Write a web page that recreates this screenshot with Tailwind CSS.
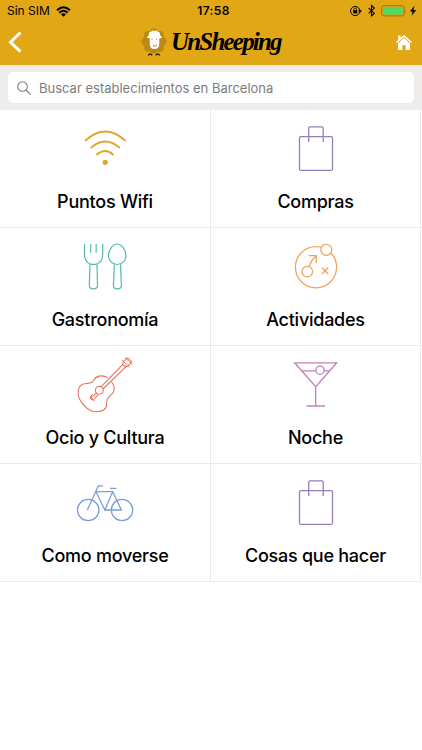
<!DOCTYPE html>
<html lang="es">
<head>
    <meta charset="UTF-8">
    <meta name="viewport" content="width=device-width, initial-scale=1.0">
    <title>UnSheeping</title>
    <script src="https://cdn.jsdelivr.net/npm/@tailwindcss/browser@4"></script>
</head>
<body class="bg-white font-['Inter',sans-serif] text-black">
    <header class="h-[65px] bg-[#e1a714]">
        <!-- Barra de estado -->
        <div class="grid grid-cols-3 items-center h-[22px] pl-[7px] pr-[4px] text-[12px] leading-none">
            <div class="flex items-center gap-[6px]">
                <span>Sin SIM</span>
                <svg class="w-[15px] h-[11px]" viewBox="0 0 15 11" fill="none" stroke="#000" stroke-width="2">
                    <path d="M1 4.2Q7.5-1.8 14 4.2M3.3 6.7Q7.5 2.9 11.7 6.7"/>
                    <path d="M5 8.2Q7.5 6.2 10 8.2L7.5 10.8Z" fill="#000" stroke="none"/>
                </svg>
            </div>
            <span class="text-center font-semibold tracking-[0.4px] pl-[2px]">17:58</span>
            <div class="flex items-center justify-end">
                <svg class="w-[68px] h-[14px]" viewBox="0 0 68 14" fill="none" stroke="#000">
                    <circle cx="5.200" cy="7" r="4.600" stroke-width="1"/>
                    <path d="M8 6.200h4L10 9Z" fill="#000" stroke="none"/>
                    <rect x="3.200" y="6.200" width="4" height="3.200" fill="#000" stroke="none"/>
                    <path d="M3.900 6.300V5.300a1.300 1.300 0 0 1 2.600 0v1" stroke-width=".8"/>
                    <path d="M18.700 4.200l5.600 5.200-2.800 2.400V1.600l2.800 2.500-5.600 5.300" stroke-width="1.100"/>
                    <rect x="31.700" y="1.700" width="22.500" height="10.200" rx="2" stroke="#9b730e"/>
                    <rect x="33.200" y="3.200" width="19.500" height="7.200" rx=".8" fill="#4cd964" stroke="none"/>
                    <path d="M55.500 5.200q1.500 1.700 0 3.400Z" fill="#9b730e" stroke="none"/>
                    <path d="M64.500 1.800l-4.600 5.600h2.600l-1 4.400 4.800-5.800h-2.800Z" fill="#000" stroke="none"/>
                </svg>
            </div>
        </div>
        <!-- Navegación -->
        <div class="flex items-center justify-between h-[43px] pl-[8px] pr-[10px] pb-[3px]">
            <svg class="w-[16px] h-[24px]" viewBox="0 0 16 24" fill="none" stroke="#fff" stroke-width="3">
                <path d="M12.500 2.500L2.500 12.200l10 9.500"/>
            </svg>
            <div class="flex items-center gap-[4px] ml-[3px]">
                <svg class="w-[26px] h-[32px] mt-[2px]" viewBox="3 4 26 32">
                    <g fill="#b98a16">
                        <circle cx="16" cy="10" r="4.500"/><circle cx="10.500" cy="12.500" r="4.500"/><circle cx="21.500" cy="12.500" r="4.500"/>
                        <circle cx="8" cy="18.500" r="4.500"/><circle cx="24" cy="18.500" r="4.500"/><circle cx="10.500" cy="24.500" r="4.500"/>
                        <circle cx="21.500" cy="24.500" r="4.500"/><circle cx="16" cy="26" r="4.500"/><circle cx="16" cy="18" r="9"/>
                    </g>
                    <path d="M11 12q-1-3 2-3.300 1.500-2 3.500-.7 2-1.200 3.500.7 2.500.500 2 3.300l2.300 2.700-3 .5v5.300q0 5.500-4.800 5.500t-4.800-5.500v-5.300l-3-.5Z" fill="#fff"/>
                    <path d="M14 15.800v1M18.500 15.800v1M15 22.800q2.500 1 4-1.200" stroke="#a87808" stroke-width=".9" fill="none"/>
                    <path d="M10.200 32.400q2-2.700 4 0M17.800 32.400q2-2.700 4 0" fill="none" stroke="#2b2005" stroke-width="1.500"/>
                </svg>
                <h1 class="w-[111px] font-['Liberation_Serif',serif] text-[25px] leading-[32px] font-bold italic tracking-[-1.8px] whitespace-nowrap">UnSheeping</h1>
            </div>
            <svg class="w-[16px] h-[17px]" viewBox="0 0 16 17" fill="#fff">
                <path d="M8 1l8 7-.9 1L8 2.900.900 9 0 8l2.200-2V1.600h2.300v2.500Z"/>
                <path d="M8 4l6 5.200V16H9.700v-4.700H6.400V16H2V9.200Z"/>
            </svg>
        </div>
    </header>

    <!-- Buscador -->
    <div class="h-[45px] bg-[#eeedeb] px-2 pt-[7px]">
        <div class="flex items-center h-[31px] bg-white rounded-[5px] pl-[9px] gap-[8px]">
            <svg class="w-[14px] h-[14px]" viewBox="0 0 14 14" fill="none" stroke="#7c7c7c" stroke-width="1.100">
                <circle cx="5.500" cy="5.500" r="4.800"/>
                <path d="M9 9l4.600 4.600"/>
            </svg>
            <span class="pt-[2px] text-[13px] text-[#7c7c7c] whitespace-nowrap">Buscar establecimientos en Barcelona</span>
        </div>
    </div>

    <!-- Categorías -->
    <main class="grid grid-cols-[211px_210px] auto-rows-[118px] text-[18px] font-medium leading-6 tracking-[-0.25px] whitespace-nowrap">
        <a href="#" class="flex flex-col items-center pt-[10px] gap-[6px] border-r border-b border-[#ebebeb]">
            <svg class="w-[80px] h-[64px]" viewBox="0 0 80 64" fill="none" stroke="#dca72b" stroke-width="1.800" stroke-linecap="round">
                <path d="M20.500 20.500Q40.200 2.500 60 20.500M26.300 27.500Q40.200 15.500 54.300 27.500M32 34.500Q40.200 27.500 48 34.500"/>
                <circle cx="40.200" cy="42.300" r="2.600" fill="#dca72b" stroke="none"/>
            </svg>
            <span>Puntos Wifi</span>
        </a>
        <a href="#" class="flex flex-col items-center pt-[10px] gap-[6px] border-r border-b border-[#ebebeb]">
            <svg class="w-[80px] h-[64px]" viewBox="0 0 80 64" fill="none" stroke="#9380b8" stroke-width="1.300">
                <rect x="23.500" y="16.600" width="33" height="33.800" rx="1.500"/>
                <path d="M32.700 22V8.200q0-1.400 1.400-1.400h11.700q1.400 0 1.400 1.400V22"/>
            </svg>
            <span>Compras</span>
        </a>
        <a href="#" class="flex flex-col items-center pt-[10px] gap-[6px] border-r border-b border-[#ebebeb]">
            <svg class="w-[80px] h-[64px]" viewBox="0 0 80 64" fill="none" stroke="#55b9ac" stroke-width="1.200">
                <path d="M19.500 6v11q0 7 6.500 9.300h5.200q6.500-2.300 6.500-9.300V6M25.700 6v8.700M31.200 6v8.700"/>
                <path d="M25 26.300l-.700 21.500q0 3 4.100 3t4.100-3l-.500-21.500"/>
                <path d="M52.200 6c4.500 0 8.800 6.500 8.800 12 0 4.500-4 8.500-8.800 8.500s-8.800-4-8.800-8.500c0-5.500 4.300-12 8.800-12Z"/>
                <path d="M49.300 26.300l-.900 21.500q0 3 4 3t4-3l-.900-21.500"/>
            </svg>
            <span>Gastronomía</span>
        </a>
        <a href="#" class="flex flex-col items-center pt-[10px] gap-[6px] border-r border-b border-[#ebebeb]">
            <svg class="w-[80px] h-[64px]" viewBox="0 0 80 64" fill="none" stroke="#f0a35a" stroke-width="1.300">
                <circle cx="40" cy="29.200" r="20.600"/>
                <circle cx="50.300" cy="11.800" r="5.500" fill="#fff"/>
                <circle cx="31.300" cy="33.600" r="5.300"/>
                <path d="M33.300 28.500Q34.500 23 40.300 17.700M32.800 17.700h7.500V25M46 29.500l6.300 6.500M52.300 29.500L46 36"/>
            </svg>
            <span>Actividades</span>
        </a>
        <a href="#" class="flex flex-col items-center pt-[10px] gap-[6px] border-r border-b border-[#ebebeb]">
            <svg class="w-[80px] h-[64px]" viewBox="0 0 80 64" fill="none" stroke="#e8745c" stroke-width="1.100">
                <path d="M42.500 21.600C37 18.500 31 19.700 28.500 24.500 26.500 28.500 22 26.500 17.500 28.300 12.500 31 12 38 14.500 43 17.500 49 24 56 32 55.700 38 55.500 42 52.500 41.700 48 41.300 43.500 42.500 41.500 45 39.700 50 36.500 50.500 31 46.700 25.700"/>
                <circle cx="34.300" cy="34.300" r="3.900"/>
                <path d="M36 30.800L57.700 8.700M38 33L60.800 10.800M57.700 8.700l.3-2.800 4.600-4 4 3.600-3.400 4.500-2.400.8Z"/>
                <path d="M57 4l7.500 7M60 1.500l7.500 7" stroke-width=".9"/>
                <path d="M31.500 37.200l-4 3.500M33 38.700l-3.600 3.900M25 40.500l4.300 4.300M27.500 38.300l-2.200 3.900 2.100 2"/>
            </svg>
            <span>Ocio y Cultura</span>
        </a>
        <a href="#" class="flex flex-col items-center pt-[10px] gap-[6px] border-r border-b border-[#ebebeb]">
            <svg class="w-[80px] h-[64px]" viewBox="0 0 80 64" fill="none" stroke="#c084ba" stroke-width="1.300">
                <path d="M18.700 6.800h42L39.700 30.700ZM39.700 30.700V50M30.500 50H49M26 14.800h13.800M48.200 14.800H54"/>
                <circle cx="44" cy="14.200" r="4.100"/>
            </svg>
            <span>Noche</span>
        </a>
        <a href="#" class="flex flex-col items-center pt-[10px] gap-[6px] border-r border-b border-[#ebebeb]">
            <svg class="w-[80px] h-[64px]" viewBox="0 0 80 64" fill="none" stroke="#7b9fd2" stroke-width="1.300">
                <circle cx="23.200" cy="36" r="10.700"/>
                <circle cx="57" cy="36" r="10.700"/>
                <path d="M22.300 36L33.300 11.800H38M31 17.700h16.700L39.800 36ZM39.800 36h16.600L47.700 17.700M45 14.400h6.500"/>
            </svg>
            <span>Como moverse</span>
        </a>
        <a href="#" class="flex flex-col items-center pt-[10px] gap-[6px] border-r border-b border-[#ebebeb]">
            <svg class="w-[80px] h-[64px]" viewBox="0 0 80 64" fill="none" stroke="#9380b8" stroke-width="1.300">
                <rect x="23.500" y="16.600" width="33" height="33.800" rx="1.500"/>
                <path d="M32.700 22V8.200q0-1.400 1.400-1.400h11.700q1.400 0 1.400 1.400V22"/>
            </svg>
            <span>Cosas que hacer</span>
        </a>
    </main>
</body>
</html>
